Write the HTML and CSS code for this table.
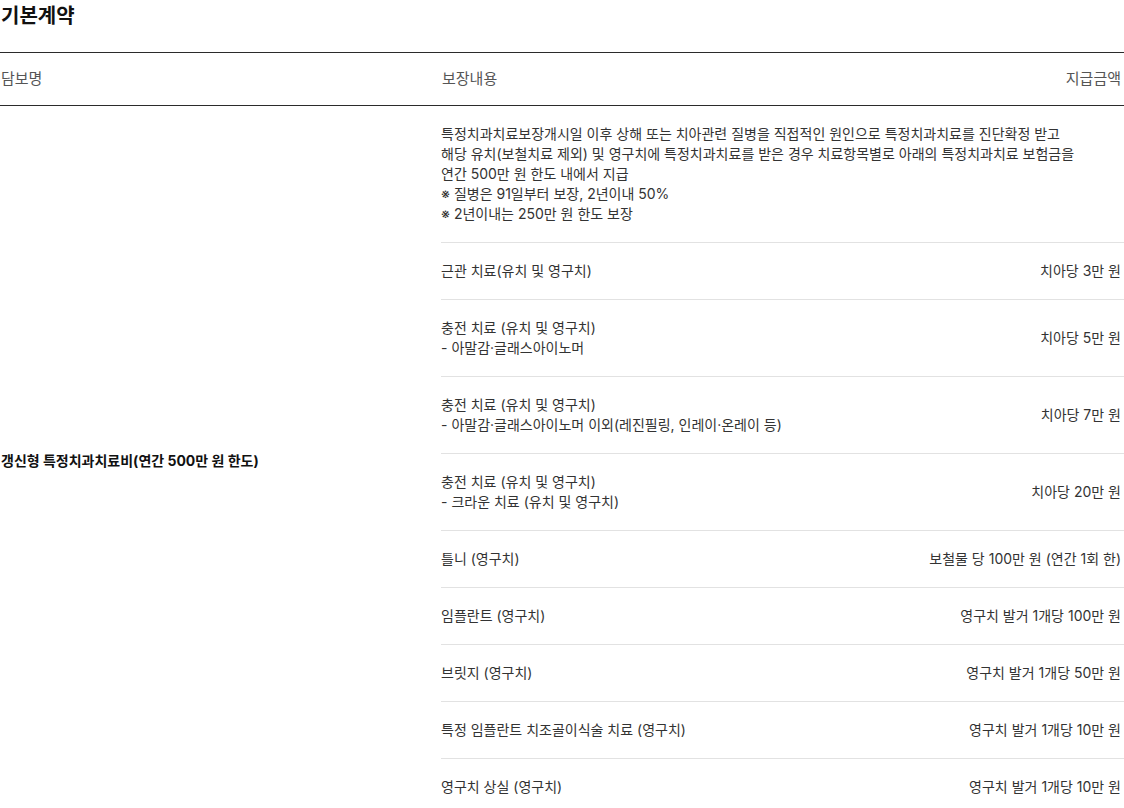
FILE: index.html
```html
<!DOCTYPE html>
<html lang="ko">
<head>
<meta charset="utf-8">
<title>기본계약</title>
<link rel="stylesheet" href="styles.css">
</head>
<body>
<h2 class="title">기본계약</h2>
<div class="table">
  <div class="thead">
    <div class="th">담보명</div>
    <div class="th">보장내용</div>
    <div class="th th-right">지급금액</div>
  </div>
  <div class="tbody">
    <div class="name">갱신형 특정치과치료비(연간 500만 원 한도)</div>
    <div class="items">
      <div class="row desc">특정치과치료보장개시일 이후 상해 또는 치아관련 질병을 직접적인 원인으로 특정치과치료를 진단확정 받고<br>해당 유치(보철치료 제외) 및 영구치에 특정치과치료를 받은 경우 치료항목별로 아래의 특정치과치료 보험금을<br>연간 500만 원 한도 내에서 지급<br>※ 질병은 91일부터 보장, 2년이내 50%<br>※ 2년이내는 250만 원 한도 보장</div>
      <div class="row"><div class="item">근관 치료(유치 및 영구치)</div><div class="amount">치아당 3만 원</div></div>
      <div class="row"><div class="item">충전 치료 (유치 및 영구치)<br>- 아말감·글래스아이노머</div><div class="amount">치아당 5만 원</div></div>
      <div class="row"><div class="item">충전 치료 (유치 및 영구치)<br>- 아말감·글래스아이노머 이외(레진필링, 인레이·온레이 등)</div><div class="amount">치아당 7만 원</div></div>
      <div class="row"><div class="item">충전 치료 (유치 및 영구치)<br>- 크라운 치료 (유치 및 영구치)</div><div class="amount">치아당 20만 원</div></div>
      <div class="row"><div class="item">틀니 (영구치)</div><div class="amount">보철물 당 100만 원 (연간 1회 한)</div></div>
      <div class="row"><div class="item">임플란트 (영구치)</div><div class="amount">영구치 발거 1개당 100만 원</div></div>
      <div class="row"><div class="item">브릿지 (영구치)</div><div class="amount">영구치 발거 1개당 50만 원</div></div>
      <div class="row"><div class="item">특정 임플란트 치조골이식술 치료 (영구치)</div><div class="amount">영구치 발거 1개당 10만 원</div></div>
      <div class="row"><div class="item">영구치 상실 (영구치)</div><div class="amount">영구치 발거 1개당 10만 원</div></div>
    </div>
  </div>
</div>
</body>
</html>
```
FILE: styles.css
```css
html, body {
  margin: 0;
  padding: 0;
  background: #fff;
}
body {
  font-family: Inter, "Noto Sans CJK KR", sans-serif;
  color: #333;
  font-size: 14px;
  line-height: 20px;
}
.title {
  margin: 0;
  padding: 3px 0 0 1px;
  font-size: 20px;
  line-height: 26px;
  font-weight: 700;
  color: #111;
}
.table {
  margin-top: 23px;
  border-top: 1px solid #2b2b2b;
}
.thead {
  display: grid;
  grid-template-columns: 441px 1fr auto;
  border-bottom: 1px solid #2b2b2b;
  padding: 0 3px 0 1px;
}
.th {
  padding: 16px 0;
  color: #555;
  font-size: 15px;
  line-height: 20px;
}
.tbody {
  display: grid;
  grid-template-columns: 441px 1fr;
}
.name {
  align-self: center;
  font-weight: 700;
  color: #111;
  padding-left: 1px;
}
.items {
  display: flex;
  flex-direction: column;
}
.row {
  display: flex;
  justify-content: space-between;
  align-items: center;
  padding: 18px 3px 18px 0;
  border-bottom: 1px solid #e2e2e2;
}
.row:last-child {
  border-bottom: none;
}
.desc {
  display: block;
}
.amount {
  text-align: right;
  white-space: nowrap;
}
```
